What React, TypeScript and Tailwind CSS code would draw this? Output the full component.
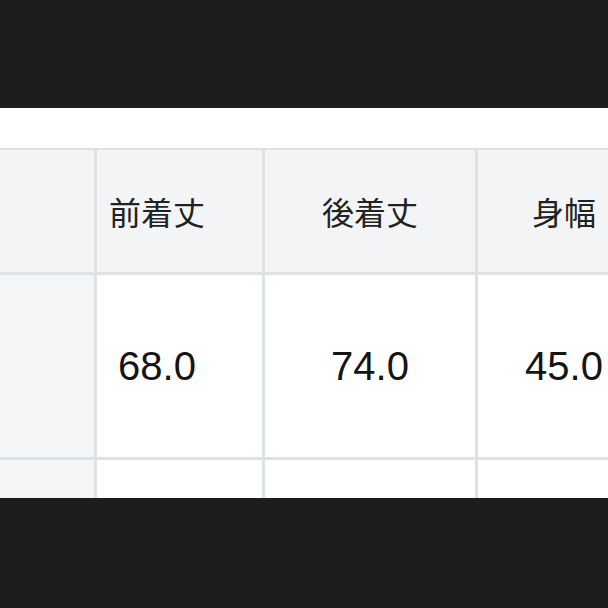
const headers = ["", "前着丈", "後着丈", "身幅"];
const values = ["", "68.0", "74.0", "45.0"];

const colPad = ["", "pr-[45px]", "", ""];

export default function App() {
  return (
    <div className="flex h-[608px] w-[608px] flex-col overflow-hidden bg-[#1d1d1d]">
      <div className="h-[108px] shrink-0 bg-[#1d1d1d]" />
      <div className="h-[390px] shrink-0 overflow-hidden bg-white pt-[40px]">
        <div className="grid w-[660px] grid-cols-[94px_165px_210px_172px] grid-rows-[122px_182px_60px] gap-[3px] bg-[#dfe2e5] pt-[2px]">
          {headers.map((h, i) => (
            <div
              key={"h" + i}
              className={`flex items-center justify-center bg-[#f3f4f5] text-[32px] text-[#222] [font-family:'Noto_Sans_CJK_JP',sans-serif] ${colPad[i]}`}
            >
              {h}
            </div>
          ))}
          {values.map((v, i) => (
            <div
              key={"v" + i}
              className={`flex items-center justify-center text-[40px] text-[#141414] [font-family:'Liberation_Sans',Arial,sans-serif] ${
                i === 0 ? "bg-[#f4f5f6]" : "bg-white"
              } ${colPad[i]}`}
            >
              {v}
            </div>
          ))}
          {values.map((_, i) => (
            <div key={"e" + i} className={i === 0 ? "bg-[#f4f5f6]" : "bg-white"} />
          ))}
        </div>
      </div>
      <div className="flex-1 bg-[#1d1d1d]" />
    </div>
  );
}
